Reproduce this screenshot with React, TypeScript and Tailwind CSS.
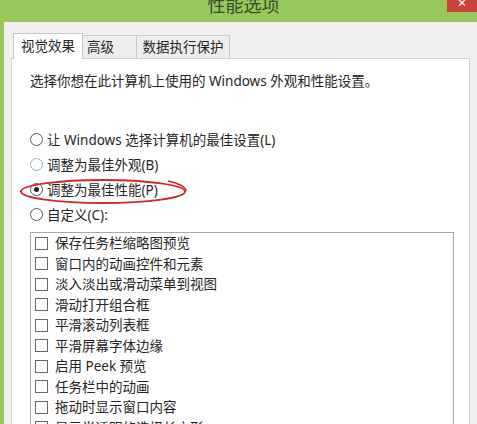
import React from 'react';

const radios = [
  { label: '让 Windows 选择计算机的最佳设置(L)', checked: false, hover: false },
  { label: '调整为最佳外观(B)', checked: false, hover: true },
  { label: '调整为最佳性能(P)', checked: true, hover: false },
  { label: '自定义(C):', checked: false, hover: false },
];

const effects = [
  '保存任务栏缩略图预览',
  '窗口内的动画控件和元素',
  '淡入淡出或滑动菜单到视图',
  '滑动打开组合框',
  '平滑滚动列表框',
  '平滑屏幕字体边缘',
  '启用 Peek 预览',
  '任务栏中的动画',
  '拖动时显示窗口内容',
  '显示半透明的选择长方形',
];

function Radio({ checked, hover }: { checked: boolean; hover: boolean }) {
  return (
    <span
      className={`flex h-[13px] w-[13px] shrink-0 items-center justify-center rounded-full border bg-white ${
        hover ? 'border-[#7fb2dc]' : 'border-[#555]'
      }`}
    >
      {checked && <span className="h-[5px] w-[5px] rounded-full bg-[#222]" />}
    </span>
  );
}

export default function App() {
  return (
    <div className="relative h-[424px] w-[477px] overflow-hidden bg-[#f0f0f0] font-['Noto_Sans','Noto_Sans_CJK_SC',sans-serif] text-[#262626]">
      {/* Title bar */}
      <div className="relative flex h-[22px] justify-center bg-[#96c85c]">
        <span className="ml-[10px] mt-[-5px] text-[18px] leading-[20px] text-[#3a4a2c]">性能选项</span>
        <div className="absolute right-0 top-0 flex h-[12px] w-[30px] justify-center overflow-hidden bg-[#c9423c]">
          <span className="mt-[-5px] text-[15px] leading-[15px] text-white">×</span>
        </div>
      </div>

      {/* Dialog body */}
      <div className="flex h-[402px] flex-col border-l-4 border-[#96c85c] pl-[7px] pt-[11px]">
        {/* Tabs */}
        <div className="relative z-10 ml-[2px] flex items-end text-[13.5px]">
          <div className="-mb-px flex h-[26px] w-[70px] items-center justify-center border border-b-0 border-[#c8c8c8] bg-white">
            视觉效果
          </div>
          <div className="flex h-[23px] w-[54px] items-center border border-l-0 border-b-0 border-[#c8c8c8] bg-[#eeeeee] pl-[4px]">
            高级
          </div>
          <div className="flex h-[23px] w-[93px] items-center justify-center border border-l-0 border-b-0 border-[#c8c8c8] bg-[#eeeeee]">
            数据执行保护
          </div>
        </div>

        {/* Tab panel */}
        <div className="flex w-[459px] flex-1 flex-col border border-b-0 border-[#d4d4d4] bg-white pl-[18px] pt-[13px] text-[13.5px]">
          <p className="h-[18px] leading-[18px]">选择你想在此计算机上使用的 Windows 外观和性能设置。</p>

          <div className="mt-[37px] flex flex-col">
            {radios.map((r) => (
              <div key={r.label} className="flex h-[25px] items-center gap-[4px]">
                <Radio checked={r.checked} hover={r.hover} />
                <span className="leading-[18px]">{r.label}</span>
              </div>
            ))}
          </div>

          <div className="mt-[5px] w-[424px] flex-1 border border-b-0 border-[#a9a9a9] pl-[4px]">
            {effects.map((e) => (
              <div key={e} className="flex h-[20.5px] items-center gap-[7px]">
                <span className="h-[13px] w-[13px] shrink-0 border border-[#666] bg-white" />
                <span className="leading-[18px]">{e}</span>
              </div>
            ))}
          </div>
        </div>
      </div>

      {/* Red hand-drawn annotation */}
      <svg className="absolute left-[18px] top-[177px]" width="172" height="30" viewBox="0 0 172 30">
        <ellipse cx="85" cy="14.5" rx="82" ry="11.5" fill="none" stroke="#d0282a" strokeWidth="2" />
        <path d="M150 4 C 160 6, 168 10, 168 14" fill="none" stroke="#d0282a" strokeWidth="1.5" />
      </svg>
    </div>
  );
}
